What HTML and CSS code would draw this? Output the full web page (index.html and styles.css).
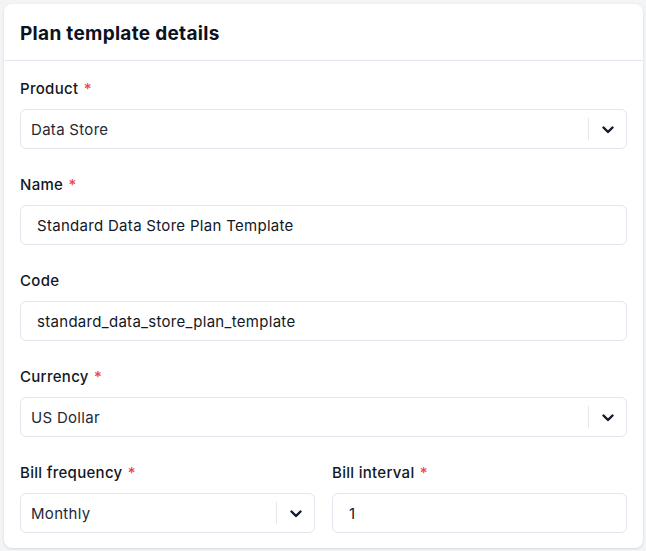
FILE: index.html
```html
<!DOCTYPE html>
<html>
<head>
    <meta charset="utf-8" />
    <link rel="stylesheet" href="styles.css">
    <title>Plan template details</title>
</head>
<body>
    <div class="card">
        <div class="card-header">
            <h2>Plan template details</h2>
        </div>
        <form class="card-body">
            <div class="field">
                <label>Product <span class="req">*</span></label>
                <div class="select">
                    <span class="value">Data Store</span>
                    <span class="sep"></span>
                    <svg class="chev" width="12" height="8" viewBox="0 0 12 8"><path d="M1.5 1.5 L6 6 L10.5 1.5" fill="none" stroke="#111827" stroke-width="2.4" stroke-linecap="round" stroke-linejoin="round"/></svg>
                </div>
            </div>
            <div class="field">
                <label>Name <span class="req">*</span></label>
                <div class="input">Standard Data Store Plan Template</div>
            </div>
            <div class="field">
                <label>Code</label>
                <div class="input">standard_data_store_plan_template</div>
            </div>
            <div class="field">
                <label>Currency <span class="req">*</span></label>
                <div class="select">
                    <span class="value">US Dollar</span>
                    <span class="sep"></span>
                    <svg class="chev" width="12" height="8" viewBox="0 0 12 8"><path d="M1.5 1.5 L6 6 L10.5 1.5" fill="none" stroke="#111827" stroke-width="2.4" stroke-linecap="round" stroke-linejoin="round"/></svg>
                </div>
            </div>
            <div class="row">
                <div class="field">
                    <label>Bill frequency <span class="req">*</span></label>
                    <div class="select">
                        <span class="value">Monthly</span>
                        <span class="sep"></span>
                        <svg class="chev" width="12" height="8" viewBox="0 0 12 8"><path d="M1.5 1.5 L6 6 L10.5 1.5" fill="none" stroke="#111827" stroke-width="2.4" stroke-linecap="round" stroke-linejoin="round"/></svg>
                    </div>
                </div>
                <div class="field">
                    <label>Bill interval <span class="req">*</span></label>
                    <div class="input">1</div>
                </div>
            </div>
        </form>
    </div>
</body>
</html>
```
FILE: styles.css
```css
* {
    box-sizing: border-box;
}
body {
    margin: 0;
    padding: 4px 3px 2px 4px;
    background-color: #f3f4f6;
    font-family: "Inter", "Noto Sans", sans-serif;
    color: #111827;
}
.card {
    background-color: #ffffff;
    border-radius: 8px;
    box-shadow: 0 1px 3px rgba(17, 24, 39, 0.12);
}
.card-header {
    height: 57px;
    padding: 3px 16px 0 16px;
    display: flex;
    align-items: center;
    border-bottom: 1px solid #e2e6ee;
}
.card-header h2 {
    margin: 0;
    font-size: 19px;
    font-weight: 700;
    color: #0b1220;
    letter-spacing: 0.3px;
}
.card-body {
    padding: 16px 16px 15px 16px;
    display: flex;
    flex-direction: column;
    gap: 24px;
}
.field {
    display: flex;
    flex-direction: column;
    gap: 8px;
    flex: 1;
}
.field label {
    font-size: 15px;
    line-height: 24px;
    font-weight: 500;
    color: #111827;
    letter-spacing: 0.3px;
}
.req {
    color: #ef4444;
    margin-left: 1px;
}
.row {
    display: flex;
    gap: 17px;
}
.input, .select {
    height: 40px;
    border: 1px solid #e2e6ee;
    border-radius: 6px;
    font-size: 15px;
    letter-spacing: 0.3px;
    display: flex;
    align-items: center;
    color: #111827;
}
.input {
    padding: 0 16px;
}
.select {
    padding: 0 0 0 10px;
    color: #1f2937;
}
.select .value {
    flex: 1;
}
.select .sep {
    width: 1px;
    height: 22px;
    background-color: #e5e7eb;
}
.select .chev {
    margin: 1px 12px 0 13px;
}
```
